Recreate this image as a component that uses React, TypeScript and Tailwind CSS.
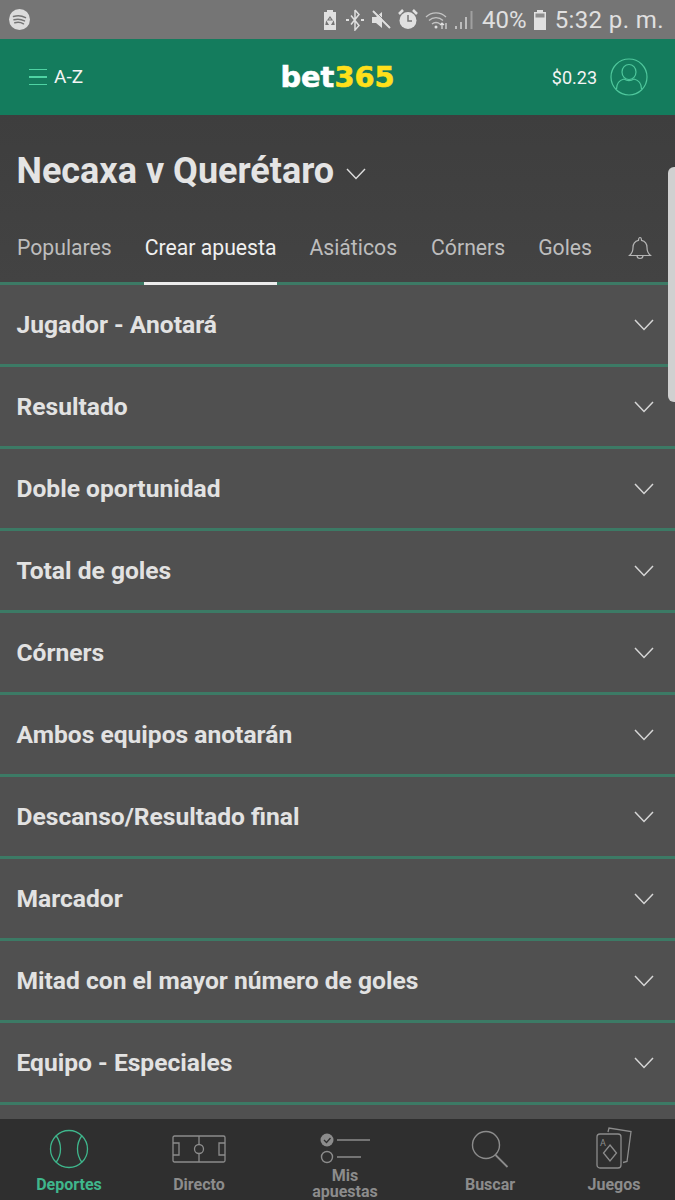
const rows = [
  "Jugador - Anotará",
  "Resultado",
  "Doble oportunidad",
  "Total de goles",
  "Córners",
  "Ambos equipos anotarán",
  "Descanso/Resultado final",
  "Marcador",
  "Mitad con el mayor número de goles",
  "Equipo - Especiales",
]

function StatusBar() {
  return (
    <div className="h-[39px] bg-[#757575] flex items-center pl-[9px] pr-[11px] text-[#e0e0e0]">
      <svg width="21" height="21" viewBox="0 0 21 21">
        <circle cx="10.5" cy="10.5" r="10.5" fill="#dcdcdc" />
        <path d="M4.5 7.5c4-1.2 8.500-.8 12 1.200M5 10.800c3.500-1 7.200-.6 10.500 1.100M5.800 13.800c3-.8 6-.5 8.700 1" fill="none" stroke="#757575" strokeWidth="1.500" strokeLinecap="round" />
      </svg>
      <div className="flex-1" />
      <div className="flex items-center">
        <svg width="14" height="21" viewBox="0 0 14 21" className="mr-[9px]">
          <path d="M4 1h6v2h3v18H1V3h3z" fill="#e0e0e0" />
          <path d="M7 8l2 3H5zM3.500 13l1.500 2.500H3zM10.500 13L11 15.500H9z" fill="none" stroke="#757575" strokeWidth="1.200" />
        </svg>
        <svg width="18" height="22" viewBox="0 0 18 22" className="mr-[8px]">
          <path d="M9 1v20l4-4.500-8-10M9 1l4 4.500-8 10" fill="none" stroke="#e0e0e0" strokeWidth="1.500" />
          <path d="M0 11h3M15 11h3" stroke="#e0e0e0" strokeWidth="2" />
        </svg>
        <svg width="19" height="20" viewBox="0 0 19 20" className="mr-[7px]">
          <path d="M0 7h4l6-5v16l-6-5H0z" fill="#e0e0e0" />
          <path d="M1 1l17 17" stroke="#e0e0e0" strokeWidth="2" />
          <path d="M1 1l17 17" stroke="#757575" strokeWidth="0.800" transform="translate(1 -1)" />
        </svg>
        <svg width="20" height="21" viewBox="0 0 20 21" className="mr-[7px]">
          <circle cx="10" cy="11.500" r="8.500" fill="#e0e0e0" />
          <path d="M10 6v6h4" fill="none" stroke="#757575" strokeWidth="1.500" />
          <path d="M1 5l4-4M19 5l-4-4" stroke="#e0e0e0" strokeWidth="2.500" />
        </svg>
        <svg width="24" height="20" viewBox="0 0 24 20" className="mr-[5px]">
          <path d="M1 7c5.500-5.500 14.500-5.500 20 0M4 10.500c3.800-3.800 10.200-3.800 14 0M7 14c2.200-2 5.800-2 8 0" fill="none" stroke="#c4c4c4" strokeWidth="1.300" />
          <circle cx="11" cy="17" r="1.500" fill="#e0e0e0" />
          <path d="M17 13v6M15 15l2-2 2 2M21 19v-6" fill="none" stroke="#e0e0e0" strokeWidth="1.200" />
        </svg>
        <svg width="20" height="20" viewBox="0 0 20 20" className="mr-[8px]">
          <path d="M1 19h2v-3H1zM6 19h2v-7H6zM11 19h2V7h-2z" fill="#bdbdbd" />
          <path d="M16.500 1h2v18h-2z" fill="#a0a0a0" />
        </svg>
        <span className="text-[24px] leading-none mr-[6px] font-['Roboto',sans-serif]">40%</span>
        <svg width="14" height="21" viewBox="0 0 14 21" className="mr-[8px]">
          <path d="M4 1h6v2h3v18H1V3h3z" fill="#e0e0e0" />
          <path d="M2.500 4.500h9v4h-9z" fill="#8d8d8d" />
        </svg>
        <span className="text-[24px] leading-none tracking-[0.4px] font-['Roboto',sans-serif]">5:32 p. m.</span>
      </div>
    </div>
  )
}

function TopBar() {
  return (
    <div className="h-[76px] bg-[#147c5d] flex items-center relative">
      <div className="flex items-center pl-[29px] w-[220px]">
        <div className="w-[18px] flex flex-col gap-[6px] mr-[7px]">
          <div className="h-[1.500px] bg-[#4fd3a3]" />
          <div className="h-[1.500px] bg-[#4fd3a3]" />
          <div className="h-[1.500px] bg-[#4fd3a3]" />
        </div>
        <span className="text-[19px] text-[#f4f4f4] pt-[1px]">A-Z</span>
      </div>
      <div className="flex-1 flex justify-center">
        <div className="text-[28.800px] font-bold leading-none font-['DejaVu_Sans',sans-serif] [-webkit-text-stroke:0.6px_currentColor] text-white">
          <span>bet</span>
          <span className="text-[#ffe01b]">365</span>
        </div>
      </div>
      <div className="flex items-center justify-end w-[220px]">
        <span className="text-[18px] text-[#f4f4f4] mr-[13px]">$0.23</span>
        <svg width="38" height="38" viewBox="0 0 38 38" fill="none" stroke="#4fc79c" strokeWidth="1.200" className="mr-[27px]">
          <circle cx="19" cy="19" r="18" />
          <ellipse cx="19" cy="14" rx="7" ry="7.500" />
          <path d="M6.500 31c0-6 3.500-9 7.500-10M31.500 31c0-6-3.500-9-7.500-10M14 21c3 2 7 2 10 0" />
        </svg>
      </div>
    </div>
  )
}

function MatchHeader() {
  return (
    <div className="h-[167px] bg-gradient-to-b from-[#3e3e3e] to-[#434343] flex flex-col pt-[34px]">
      <div className="flex items-center pl-[16.500px] h-[44px]">
        <span className="text-[36px] font-bold leading-[44px] text-[#e4e4e4]">Necaxa v Querétaro</span>
        <svg width="20" height="12" viewBox="0 0 20 12" fill="none" stroke="#dddddd" strokeWidth="1.400" className="ml-[12px] mt-[5px]">
          <path d="M1 1l9 9.500L19 1" />
        </svg>
      </div>
      <div className="flex items-center h-[28px] mt-[41px] text-[21.200px] leading-[28px] text-[#bdbdbd] pl-[17px]">
        <span className="mr-[33px]">Populares</span>
        <span className="mr-[33px] text-[#f0f0f0]">Crear apuesta</span>
        <span className="mr-[34px]">Asiáticos</span>
        <span className="mr-[33px]">Córners</span>
        <span className="mr-[36px]">Goles</span>
        <svg width="24" height="24" viewBox="0 0 24 24" fill="none" stroke="#b5b5b5" strokeWidth="1.200">
          <path d="M1.500 19.500c2.500-2 3.500-4 3.500-8 0-4 2.500-6.500 5.500-7.200C10.500 3 11 1.500 12 1.500s1.500 1.500 1.500 2.800c3 .7 5.500 3.200 5.500 7.200 0 4 1 6 3.500 8z" />
          <path d="M9 19.500c0 4 6 4 6 0" />
        </svg>
      </div>
    </div>
  )
}

function MarketRow({ label, active }: { label: string; active?: boolean }) {
  return (
    <div className="shrink-0">
      <div className="h-[3px] bg-[#3c7a65] relative">
        {active && <div className="absolute left-[144px] w-[133px] h-[3px] bg-[#ececec]" />}
      </div>
      <div className="h-[79px] bg-[#505050] flex items-center justify-between pl-[16.500px] pr-[21px]">
        <span className="text-[24.600px] font-bold text-[#e2e2e2] pt-[2px]">{label}</span>
        <svg width="20" height="12" viewBox="0 0 20 12" fill="none" stroke="#d6d6d6" strokeWidth="1.500">
          <path d="M1 1l9 9.500L19 1" />
        </svg>
      </div>
    </div>
  )
}

function NavItem({ label, active, width, tight, children }: { label: string; active?: boolean; width: string; tight?: boolean; children: React.ReactNode }) {
  return (
    <div className={`shrink-0 flex flex-col items-center ${width}`}>
      <div className="h-[46px] flex items-center justify-center">{children}</div>
      <span className={`text-[16px] font-bold leading-[16px] text-center ${tight ? "-mt-[3px] w-[80px]" : "mt-[5px]"} ${active ? "text-[#3fb68c]" : "text-[#8c8c8c]"}`}>
        {label}
      </span>
    </div>
  )
}

function BottomNav() {
  return (
    <div className="h-[81px] bg-[#2f2f2f] flex overflow-hidden pt-[7px]">
      <NavItem label="Deportes" active width="w-[138px]">
        <svg width="40" height="40" viewBox="0 0 40 40" fill="none" stroke="#3fb68c" strokeWidth="1.300">
          <circle cx="20" cy="20" r="18.500" />
          <path d="M7 6.500c6 8 6 19 0 27M33 6.500c-6 8-6 19 0 27" />
        </svg>
      </NavItem>
      <NavItem label="Directo" width="w-[122px]">
        <svg width="54" height="28" viewBox="0 0 54 28" fill="none" stroke="#8c8c8c" strokeWidth="1.300">
          <rect x="1" y="1" width="52" height="26" rx="1.500" />
          <path d="M27 1v8M27 19v8" />
          <circle cx="27" cy="14" r="4.500" />
          <path d="M1 8h6v12H1M53 8h-6v12h6" />
        </svg>
      </NavItem>
      <NavItem label="Mis apuestas" tight width="w-[170px]">
        <svg width="50" height="42" viewBox="0 0 50 42" fill="none" className="mt-[2px]">
          <circle cx="7" cy="11" r="6.500" fill="#8c8c8c" />
          <path d="M4 11l2.500 2.500L10.500 9" stroke="#2f2f2f" strokeWidth="1.300" />
          <circle cx="7" cy="28" r="5.500" stroke="#8c8c8c" strokeWidth="1.400" />
          <path d="M17 11h33M17 28h24" stroke="#8c8c8c" strokeWidth="1.400" />
        </svg>
      </NavItem>
      <NavItem label="Buscar" width="w-[120px]">
        <svg width="38" height="38" viewBox="0 0 38 38" fill="none" stroke="#8c8c8c" strokeWidth="1.400">
          <circle cx="15" cy="15" r="13.500" />
          <path d="M24.500 25L36.500 37" strokeWidth="1.800" />
        </svg>
      </NavItem>
      <NavItem label="Juegos" width="w-[128px]">
        <svg width="37" height="42" viewBox="0 0 37 42" fill="none" stroke="#8c8c8c" strokeWidth="1.300" className="-mt-[3px]">
          <rect x="1" y="7" width="24" height="34" rx="3" />
          <path d="M14 18l6.500 8-6.500 8-6.500-8z" />
          <path d="M12 5l1-4 22 3.500-4 30-4 1" />
          <text x="4" y="19" fontSize="9" fill="#8c8c8c" stroke="none" fontFamily="Roboto, sans-serif">A</text>
        </svg>
      </NavItem>
    </div>
  )
}

export default function App() {
  return (
    <div className="w-[675px] h-[1200px] overflow-hidden flex flex-col relative bg-[#505050] font-['Roboto',sans-serif]">
      <StatusBar />
      <TopBar />
      <MatchHeader />
      <div className="flex-1 overflow-hidden flex flex-col">
        {rows.map((r, i) => (
          <MarketRow key={r} label={r} active={i === 0} />
        ))}
        <div className="h-[3px] shrink-0 bg-[#3c7a65]" />
      </div>
      <BottomNav />
      <div className="absolute right-0 top-[167px] w-[7px] h-[235px] bg-[#d0d0d0] rounded-tl-[6px] rounded-bl-[6px]" />
    </div>
  )
}
